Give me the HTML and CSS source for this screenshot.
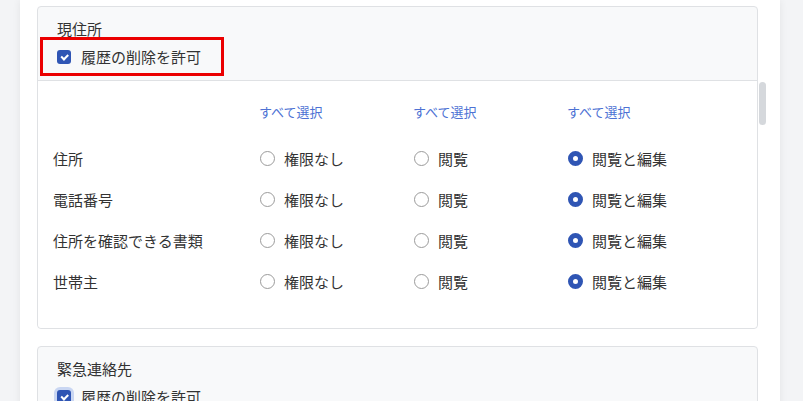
FILE: index.html
```html
<!DOCTYPE html>
<html lang="ja">

<head>
    <meta charset="UTF-8">
    <meta name="viewport" content="width=device-width, initial-scale=1.0">
    <title>権限設定</title>
    <link rel="stylesheet" href="styles.css">
</head>

<body>
    <div class="panel">
        <!-- 現住所 -->
        <section class="card">
            <div class="card-header">
                <div class="card-title">現住所</div>
                <label class="history-toggle highlighted">
                    <span class="checkbox"></span>
                    <span>履歴の削除を許可</span>
                </label>
            </div>
            <div class="card-body">
                <div class="perm-grid">
                    <div></div>
                    <a class="select-all">すべて選択</a>
                    <a class="select-all">すべて選択</a>
                    <a class="select-all">すべて選択</a>

                    <div class="field-name">住所</div>
                    <div class="option"><span class="radio"></span>権限なし</div>
                    <div class="option"><span class="radio"></span>閲覧</div>
                    <div class="option"><span class="radio checked"></span>閲覧と編集</div>

                    <div class="field-name">電話番号</div>
                    <div class="option"><span class="radio"></span>権限なし</div>
                    <div class="option"><span class="radio"></span>閲覧</div>
                    <div class="option"><span class="radio checked"></span>閲覧と編集</div>

                    <div class="field-name">住所を確認できる書類</div>
                    <div class="option"><span class="radio"></span>権限なし</div>
                    <div class="option"><span class="radio"></span>閲覧</div>
                    <div class="option"><span class="radio checked"></span>閲覧と編集</div>

                    <div class="field-name">世帯主</div>
                    <div class="option"><span class="radio"></span>権限なし</div>
                    <div class="option"><span class="radio"></span>閲覧</div>
                    <div class="option"><span class="radio checked"></span>閲覧と編集</div>
                </div>
            </div>
            <div class="scroll-thumb"></div>
        </section>

        <!-- 緊急連絡先 -->
        <section class="card">
            <div class="card-header">
                <div class="card-title">緊急連絡先</div>
                <label class="history-toggle">
                    <span class="checkbox focused"></span>
                    <span>履歴の削除を許可</span>
                </label>
            </div>
        </section>
    </div>
</body>

</html>
```

FILE: styles.css
```css
/* General */
html,
body {
    height: 100%;
    overflow: hidden;
}

body {
    margin: 0;
    background-color: #f3f4f6;
    font-family: "Noto Sans CJK JP", "Noto Sans", sans-serif;
    color: #333;
}

/* White panel */
.panel {
    margin: 0 23px 0 20px;
    min-height: 100%;
    padding: 6px 22px 0 17px;
    background-color: #fff;
    box-shadow: 0 0 8px rgba(0, 0, 0, 0.07);
}

/* Card */
.card {
    position: relative;
    border: 1px solid #dfe1e4;
    border-radius: 4px;
    background-color: #f8f9fa;
    margin-bottom: 17px;
}

.card-header {
    padding: 12px 0 4px 19px;
    border-bottom: 1px solid #dfe1e4;
}

.card-title {
    font-size: 15px;
    line-height: 20px;
    height: 20px;
}

.history-toggle {
    display: inline-flex;
    align-items: center;
    gap: 10px;
    margin: -2px 0 0 -17px;
    padding: 7px 20px 6px 14px;
    border: 3px solid transparent;
    font-size: 15px;
    line-height: 20px;
}

.history-toggle.highlighted {
    border-color: #eb0000;
}

.checkbox {
    position: relative;
    width: 14px;
    height: 14px;
    border-radius: 3px;
    background-color: #2f55b4;
}

.checkbox::after {
    content: "";
    position: absolute;
    left: 4px;
    top: 3.5px;
    width: 5px;
    height: 2.5px;
    border-left: 2px solid #fff;
    border-bottom: 2px solid #fff;
    transform: rotate(-45deg);
}

.checkbox.focused {
    box-shadow: 0 0 0 3px #c9d6f2;
}

/* Card body */
.card-body {
    background-color: #fff;
    border-radius: 0 0 4px 4px;
    padding: 21px 0 26px 15px;
}

.perm-grid {
    display: grid;
    grid-template-columns: 206px 154px 154px 1fr;
    grid-template-rows: 36px repeat(4, 41px);
    align-items: center;
}

.perm-grid > :nth-child(-n+4) {
    align-self: start;
}

.select-all {
    color: #4d72d4;
    font-size: 13px;
    line-height: 20px;
    cursor: pointer;
}

.field-name {
    font-size: 15px;
    line-height: 20px;
}

.option {
    display: flex;
    align-items: center;
    gap: 9px;
    padding-left: 1px;
    font-size: 15px;
    line-height: 20px;
}

.radio {
    box-sizing: border-box;
    width: 15px;
    height: 15px;
    border: 1px solid #9b9b9b;
    border-radius: 50%;
    background-color: #fff;
}

.radio.checked {
    border: 5px solid #2f55b4;
}

/* Scrollbar overlay */
.scroll-thumb {
    position: absolute;
    top: 75px;
    right: -9px;
    width: 7px;
    height: 43px;
    border-radius: 4px;
    background-color: #d5d8dc;
}
```
